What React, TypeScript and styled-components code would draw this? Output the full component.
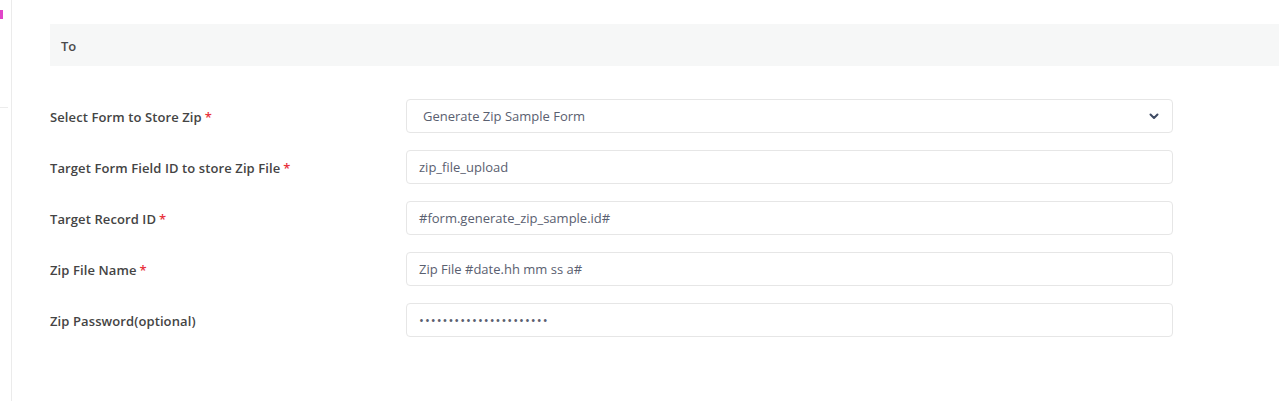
import React from 'react';
import styled, { createGlobalStyle } from 'styled-components';

const GlobalStyle = createGlobalStyle`
  html, body {
    margin: 0;
    padding: 0;
    background: #fff;
    font-family: "Open Sans", "Liberation Sans", sans-serif;
  }
  * { box-sizing: border-box; }
`;

const Page = styled.div({
  display: 'flex',
  height: 401,
  overflow: 'hidden',
});

const Sidebar = styled.div({
  width: 12,
  flexShrink: 0,
  borderRight: '1px solid #ebebeb',
  paddingTop: 10,
});

const SideMark = styled.div({
  width: 3,
  height: 9,
  background: '#e045c8',
});

const SideRule = styled.div({
  marginTop: 88,
  width: 8,
  height: 1,
  background: '#ececec',
});

const Main = styled.div({
  flexGrow: 1,
  padding: '24px 0 0 38px',
});

const SectionHeader = styled.div({
  height: 42,
  background: '#f6f7f7',
  display: 'flex',
  alignItems: 'center',
  paddingLeft: 11,
  paddingTop: 1,
  fontSize: 13,
  fontWeight: 600,
  color: '#4a4a4a',
  marginRight: -4,
});

const Form = styled.div({
  paddingTop: 33,
  display: 'flex',
  flexDirection: 'column',
  gap: 17,
  width: 1123,
});

const Row = styled.div({
  display: 'flex',
  alignItems: 'center',
});

const Label = styled.div({
  width: 356,
  flexShrink: 0,
  paddingTop: 2,
  fontSize: 13,
  fontWeight: 600,
  letterSpacing: 0.1,
  color: '#444',
});

const Required = styled.span({
  color: '#e8323c',
  marginLeft: 3,
});

const Field = styled.div<{ $password?: boolean }>(({ $password }) => ({
  flexGrow: 1,
  height: 34,
  border: '1px solid #e6e6e6',
  borderRadius: 4,
  display: 'flex',
  alignItems: 'center',
  padding: '0 12px',
  fontSize: 13,
  color: '#5a6070',
  letterSpacing: $password ? 1 : 0,
}));

const SelectField = styled(Field)({
  paddingLeft: 16,
  justifyContent: 'space-between',
});

const Chevron = () => (
  <svg width="12" height="12" viewBox="0 0 12 12">
    <path d="M2.5 4.5 L6 8 L9.5 4.5" fill="none" stroke="#3e4a63" strokeWidth="2" strokeLinecap="round" strokeLinejoin="round" />
  </svg>
);

const rows = [
  { label: 'Target Form Field ID to store Zip File', value: 'zip_file_upload', required: true },
  { label: 'Target Record ID', value: '#form.generate_zip_sample.id#', required: true },
  { label: 'Zip File Name', value: 'Zip File #date.hh mm ss a#', required: true },
  { label: 'Zip Password(optional)', value: '\u2022'.repeat(22), required: false, password: true },
];

const App = () => {
  return (
    <Page>
      <GlobalStyle />
      <Sidebar>
        <SideMark />
        <SideRule />
      </Sidebar>
      <Main>
        <SectionHeader>To</SectionHeader>
        <Form>
          <Row>
            <Label>
              Select Form to Store Zip<Required>*</Required>
            </Label>
            <SelectField>
              Generate Zip Sample Form
              <Chevron />
            </SelectField>
          </Row>
          {rows.map((r) => (
            <Row key={r.label}>
              <Label>
                {r.label}
                {r.required && <Required>*</Required>}
              </Label>
              <Field $password={r.password}>{r.value}</Field>
            </Row>
          ))}
        </Form>
      </Main>
    </Page>
  );
};

export default App;
